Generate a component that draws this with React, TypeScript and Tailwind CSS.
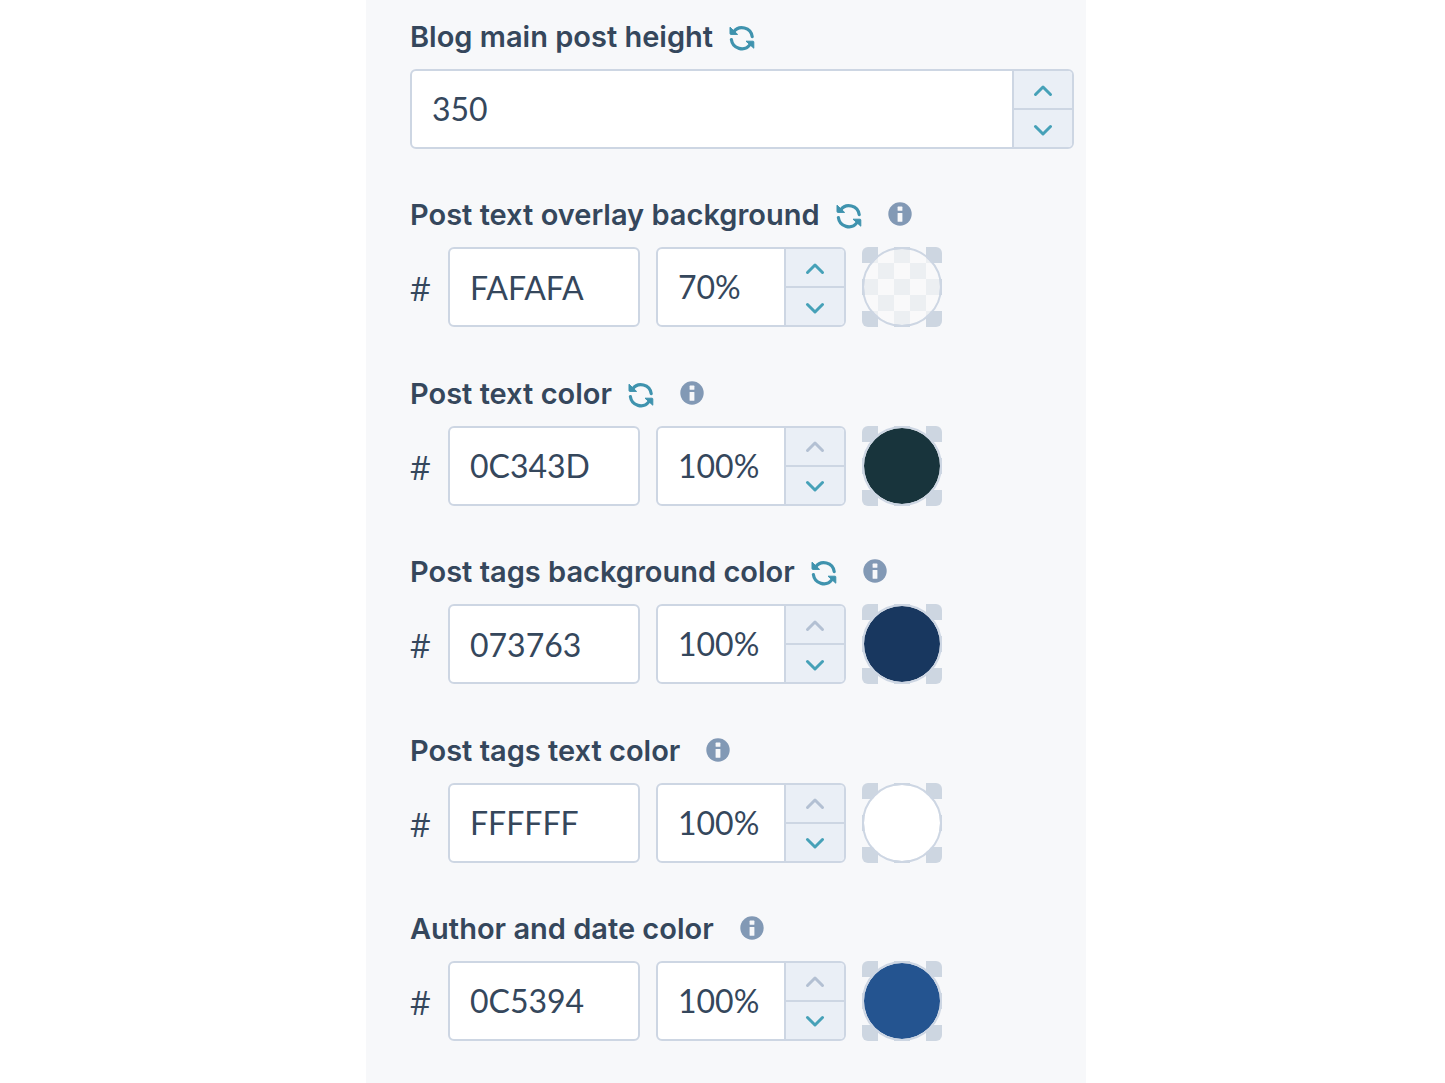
import { useId, useState } from "react";
import { clsx } from "clsx";

type ColorSetting = {
  name: string;
  hex: string;
  swatch: string;
  opacity: number;
  resettable?: boolean;
};

// swatch is the muted on-screen tone of the saved hex
const COLORS: ColorSetting[] = [
  { name: "Post text overlay background", hex: "FAFAFA", swatch: "#fafafa", opacity: 70, resettable: true },
  { name: "Post text color", hex: "0C343D", swatch: "#18343c", opacity: 100, resettable: true },
  { name: "Post tags background color", hex: "073763", swatch: "#18375f", opacity: 100, resettable: true },
  { name: "Post tags text color", hex: "FFFFFF", swatch: "#ffffff", opacity: 100 },
  { name: "Author and date color", hex: "0C5394", swatch: "#245490", opacity: 100 },
];

function ResetIcon() {
  return (
    <svg viewBox="0 0 26 26" className="h-[26px] w-[26px]" fill="none" stroke="currentColor" strokeWidth="3.2">
      <path d="M4.6 7A10.3 10.3 0 0 1 23.2 11.6" strokeLinecap="round" />
      <path d="M2.4 14.6A10.4 10.4 0 0 0 21 19.6" strokeLinecap="round" />
      <path d="M1 2.2 8.6 9.4H1.8Q1 9.4 1 8.6Z" fill="currentColor" strokeWidth="1" strokeLinejoin="round" />
      <path d="M24.8 23.2 17 16.2H24Q24.8 16.2 24.8 17Z" fill="currentColor" strokeWidth="1" strokeLinejoin="round" />
    </svg>
  );
}

function InfoIcon() {
  return (
    <svg viewBox="0 0 24 24" className="h-6 w-6">
      <circle cx="12" cy="12" r="11.7" fill="#8299b5" />
      <rect x="9.6" y="4.6" width="4.8" height="4.2" rx=".6" fill="#f7f8fa" />
      <rect x="9.6" y="11" width="4.8" height="8.8" rx=".6" fill="#f7f8fa" />
    </svg>
  );
}

function Chevron({ down }: { down?: boolean }) {
  return (
    <svg viewBox="0 0 20 14" className="h-3.5 w-5" fill="none" stroke="currentColor" strokeWidth="3" strokeLinecap="round" strokeLinejoin="round">
      <path d={down ? "M2.5 4.5 10 12 17.5 4.5" : "M2.5 11.5 10 4 17.5 11.5"} />
    </svg>
  );
}

function FieldLabel({ id, name, onReset, info }: { id: string; name: string; onReset?: () => void; info?: boolean }) {
  return (
    <div className="mb-3.5 flex h-9 items-center">
      <label htmlFor={id} className="font-['Inter',sans-serif] text-[29px] leading-9 font-semibold">{name}</label>
      {onReset && (
        <button type="button" onClick={onReset} aria-label={`Reset ${name}`} className="mt-0.5 ml-4 text-[#3f93ae]">
          <ResetIcon />
        </button>
      )}
      {info && (
        <button type="button" aria-label={`About ${name}`} className="mb-0.5 ml-[26px]">
          <InfoIcon />
        </button>
      )}
    </div>
  );
}

type StepperProps = {
  id?: string;
  label?: string;
  value: number;
  onChange: (next: number) => void;
  max?: number;
  suffix?: string;
  className?: string;
};

function Stepper({ id, label, value, onChange, max = Infinity, suffix = "", className }: StepperProps) {
  const step = "flex flex-1 items-center justify-center bg-[#eaeff6] text-[#46a1b8] disabled:text-[#b3c0d3]";
  return (
    <div className={clsx("flex h-20 overflow-hidden rounded-md border-2 border-[#cdd6e3] bg-white", className)}>
      <input
        id={id}
        aria-label={label}
        inputMode="numeric"
        value={`${value}${suffix}`}
        onChange={(e) => onChange(Math.min(max, parseInt(e.target.value, 10) || 0))}
        className="min-w-0 flex-1 px-5 text-[32px] leading-10 outline-none"
      />
      <div className="flex w-[60px] shrink-0 flex-col divide-y-2 divide-[#cdd6e3] border-l-2 border-[#cdd6e3]">
        <button type="button" aria-label="Increase" disabled={value >= max} onClick={() => onChange(value + 1)} className={step}>
          <Chevron />
        </button>
        <button type="button" aria-label="Decrease" disabled={value <= 0} onClick={() => onChange(value - 1)} className={step}>
          <Chevron down />
        </button>
      </div>
    </div>
  );
}

function ColorField({ setting }: { setting: ColorSetting }) {
  const id = useId();
  const [hex, setHex] = useState(setting.hex);
  const [opacity, setOpacity] = useState(setting.opacity);
  const fill = hex === setting.hex ? setting.swatch : `#${hex}`;

  function reset() {
    setHex(setting.hex);
    setOpacity(setting.opacity);
  }

  return (
    <div>
      <FieldLabel id={id} name={setting.name} onReset={setting.resettable ? reset : undefined} info />
      <div className="flex items-center">
        <span className="w-[38px] shrink-0 pt-1 font-['Open_Sans',sans-serif] text-[32px] leading-10">#</span>
        <input
          id={id}
          value={hex}
          maxLength={6}
          onChange={(e) => setHex(e.target.value.toUpperCase())}
          className="h-20 w-48 rounded-md border-2 border-[#cdd6e3] bg-white px-5 text-[32px] leading-10 outline-none"
        />
        <Stepper label={`${setting.name} opacity`} value={opacity} onChange={setOpacity} max={100} suffix="%" className="ml-4 w-[190px]" />
        {/* checkerboard shows through when the color is translucent */}
        <button
          type="button"
          aria-label={`Pick ${setting.name}`}
          className="ml-4 h-20 w-20 overflow-hidden rounded-md bg-[repeating-conic-gradient(#f7f8fa_0_25%,#cdd6e1_0_50%)] bg-size-[32px_32px]"
        >
          <span
            className="block h-full w-full rounded-full border-2 border-[#cdd6e3] bg-clip-padding"
            style={{ backgroundColor: `color-mix(in srgb, ${fill} ${opacity}%, transparent)` }}
          />
        </button>
      </div>
    </div>
  );
}

export default function App() {
  const heightId = useId();
  const [height, setHeight] = useState(350);

  return (
    <div className="min-h-screen bg-white pl-[7px] font-['Lato',sans-serif] text-[#35475c]">
      <main className="mx-auto flex min-h-screen max-w-[720px] flex-col justify-between gap-12 bg-[#f7f8fa] pt-[19px] pr-3 pb-[42px] pl-11">
        <div>
          <FieldLabel id={heightId} name="Blog main post height" onReset={() => setHeight(350)} />
          <Stepper id={heightId} value={height} onChange={setHeight} />
        </div>
        {COLORS.map((c) => <ColorField key={c.name} setting={c} />)}
      </main>
    </div>
  );
}
